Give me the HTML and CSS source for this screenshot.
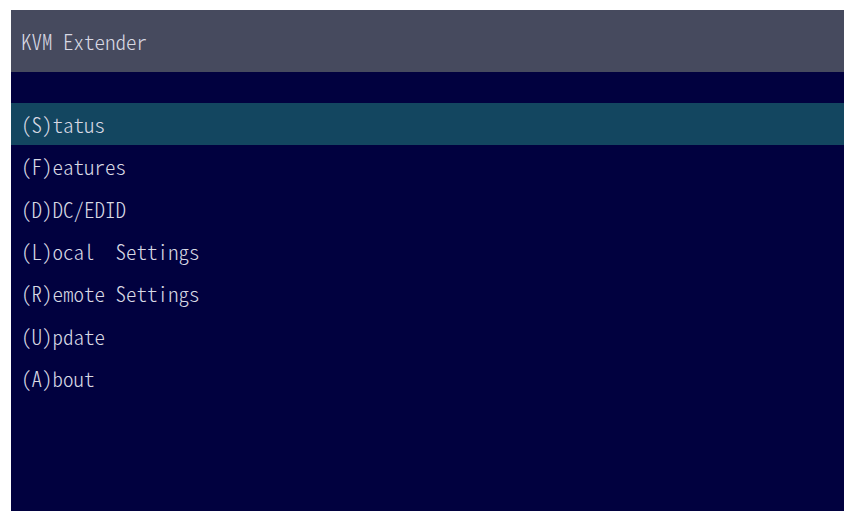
FILE: index.html
```html
<!DOCTYPE html>
<html>
<head>
<meta charset="utf-8">
<link rel="stylesheet" href="styles.css">
</head>
<body>
<div class="screen">
  <div class="header">KVM Extender</div>
  <div class="spacer"></div>
  <ul class="menu">
    <li class="item selected">(S)tatus</li>
    <li class="item">(F)eatures</li>
    <li class="item">(D)DC/EDID</li>
    <li class="item">(L)ocal  Settings</li>
    <li class="item">(R)emote Settings</li>
    <li class="item">(U)pdate</li>
    <li class="item">(A)bout</li>
  </ul>
</div>
</body>
</html>
```
FILE: styles.css
```css
html, body {
  margin: 0;
  padding: 0;
  background: #ffffff;
}
.screen {
  margin: 10px 0 0 11px;
  width: 833px;
  height: 501px;
  background: #01013f;
  display: flex;
  flex-direction: column;
  font-family: "Noto Sans CJK JP", "Noto Sans", sans-serif;
  font-feature-settings: "hwid" 1;
  font-size: 21px;
  font-weight: 300;
  color: #d8d9e4;
}
.header {
  height: 62px;
  background: #464a5e;
  display: flex;
  align-items: center;
  padding-left: 10px;
  white-space: pre;
}
.spacer {
  height: 31px;
}
.menu {
  list-style: none;
  margin: 0;
  padding: 0;
  display: flex;
  flex-direction: column;
}
.item {
  height: 42.3px;
  display: flex;
  align-items: center;
  padding-left: 10px;
  white-space: pre;
}
.item.selected {
  background: #134660;
}
```
